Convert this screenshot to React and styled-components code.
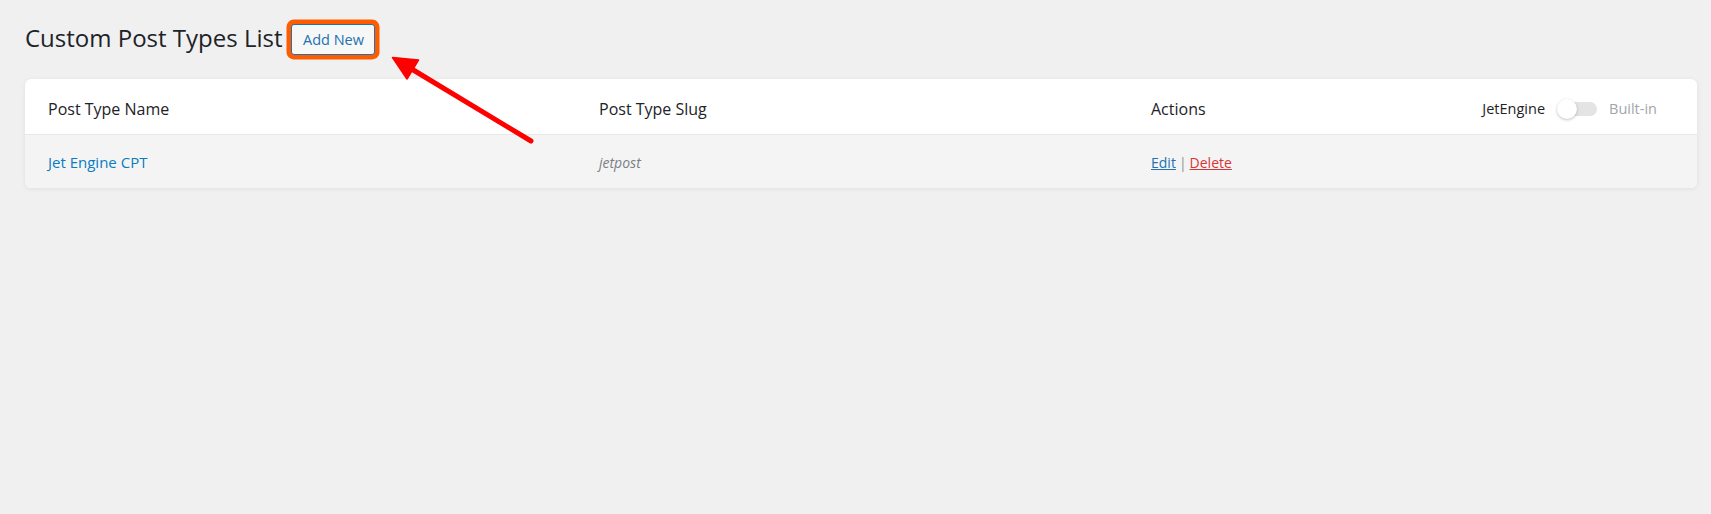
import * as React from 'react';
import styled, { createGlobalStyle } from 'styled-components';

const post_types = [{ name: 'Jet Engine CPT', slug: 'jetpost' }];

export default function App() {
  return (
    <Page>
      <GlobalStyle />

      <TitleRow>
        <Title>Custom Post Types List</Title>
        <AddNew highlight>Add New</AddNew>
      </TitleRow>

      <Card>
        <HeaderRow>
          <HeadCell>Post Type Name</HeadCell>
          <HeadCell>Post Type Slug</HeadCell>
          <HeadCell className="actions">
            <span>Actions</span>
            <SourceSwitch>
              <SwitchLabel>JetEngine</SwitchLabel>
              <Toggle>
                <span className="track" />
                <span className="knob" />
              </Toggle>
              <SwitchLabel muted>Built-in</SwitchLabel>
            </SourceSwitch>
          </HeadCell>
        </HeaderRow>

        {post_types.map((type) => (
          <BodyRow key={type.slug}>
            <NameLink href="#">{type.name}</NameLink>
            <Slug>{type.slug}</Slug>
            <Actions>
              <ActionLink href="#">Edit</ActionLink>
              <span className="sep">|</span>
              <ActionLink href="#" danger>
                Delete
              </ActionLink>
            </Actions>
          </BodyRow>
        ))}
      </Card>

      {/* annotation arrow pointing at the Add New button */}
      <Arrow width="1711" height="514" viewBox="0 0 1711 514">
        <line x1="531" y1="141" x2="410" y2="68" stroke="#fe0000" strokeWidth="5" strokeLinecap="round" />
        <polygon points="392.5,57.5 407,79 418.5,60" fill="#fe0000" stroke="#fe0000" strokeWidth="1.5" strokeLinejoin="round" />
      </Arrow>
    </Page>
  );
}

const GlobalStyle = createGlobalStyle`
  html, body {
    margin: 0;
    padding: 0;
    background: #f0f0f1;
  }

  body {
    font-family: "Open Sans", "Noto Sans", sans-serif;
    color: #1d2327;
  }
`;

const Page = styled.div`
  position: relative;
  min-height: 514px;
  box-sizing: border-box;
  padding: 22px 14px 0 25px;
`;

const TitleRow = styled.div`
  display: flex;
  align-items: center;
  gap: 9px;
  height: 32px;
  margin-bottom: 25px;
`;

const Title = styled.h1`
  margin: 0;
  font-size: 24px;
  line-height: 32px;
  font-weight: 400;
  color: #1d2327;
`;

const AddNew = styled.button`
  height: 31px;
  margin-top: 2px;
  padding: 0 10.5px;
  border: 1px solid #2271b1;
  border-radius: 3px;
  background: #f6f7f7;
  color: #2271b1;
  font-family: inherit;
  font-size: 14.5px;
  line-height: 29px;
  box-shadow: ${(p) => (p.highlight ? '0 0 0 4.5px #ff5c00' : 'none')};
`;

const Card = styled.div`
  background: #fff;
  border-radius: 6px;
  overflow: hidden;
  box-shadow: 0 1px 5px rgba(0, 0, 0, 0.07);
`;

const Grid = styled.div`
  display: grid;
  grid-template-columns: 551px 552px 1fr;
  padding: 0 40px 0 23px;
`;

const HeaderRow = styled(Grid)`
  height: 56px;
  align-items: center;
  border-bottom: 1px solid #e8e8e8;
  box-sizing: border-box;
`;

const HeadCell = styled.div`
  font-size: 16px;
  font-weight: 500;
  line-height: 24px;
  padding-top: 4px;
  color: #1d2327;

  &.actions {
    display: flex;
    align-items: center;
    justify-content: space-between;
  }
`;

const SourceSwitch = styled.div`
  display: flex;
  align-items: center;
  gap: 12px;
`;

const SwitchLabel = styled.span`
  font-size: 14.5px;
  color: ${(p) => (p.muted ? '#a2a5a9' : '#1d2327')};
`;

const Toggle = styled.span`
  position: relative;
  display: block;
  width: 40px;
  height: 20px;

  .track {
    position: absolute;
    left: 3px;
    right: 0;
    top: 3px;
    height: 14px;
    border-radius: 7px;
    background: #e4e4e4;
  }

  .knob {
    position: absolute;
    left: 0;
    top: 0;
    width: 20px;
    height: 20px;
    border-radius: 50%;
    background: #fff;
    box-shadow: 0 1px 3px rgba(0, 0, 0, 0.25);
  }
`;

const BodyRow = styled(Grid)`
  background: #f4f4f4;
  padding-top: 16px;
  padding-bottom: 14px;
  line-height: 22px;
  align-items: baseline;
`;

const NameLink = styled.a`
  justify-self: start;
  font-size: 15px;
  color: #0a7cc1;
  text-decoration: none;
`;

const Slug = styled.span`
  font-size: 14px;
  font-style: italic;
  color: #7b7f84;
`;

const Actions = styled.span`
  font-size: 14px;

  .sep {
    margin: 0 3px;
    color: #8c8f94;
  }
`;

const ActionLink = styled.a`
  color: ${(p) => (p.danger ? '#d63638' : '#2271b1')};
  text-decoration: underline;
`;

const Arrow = styled.svg`
  position: absolute;
  left: 0;
  top: 0;
  pointer-events: none;
`;
